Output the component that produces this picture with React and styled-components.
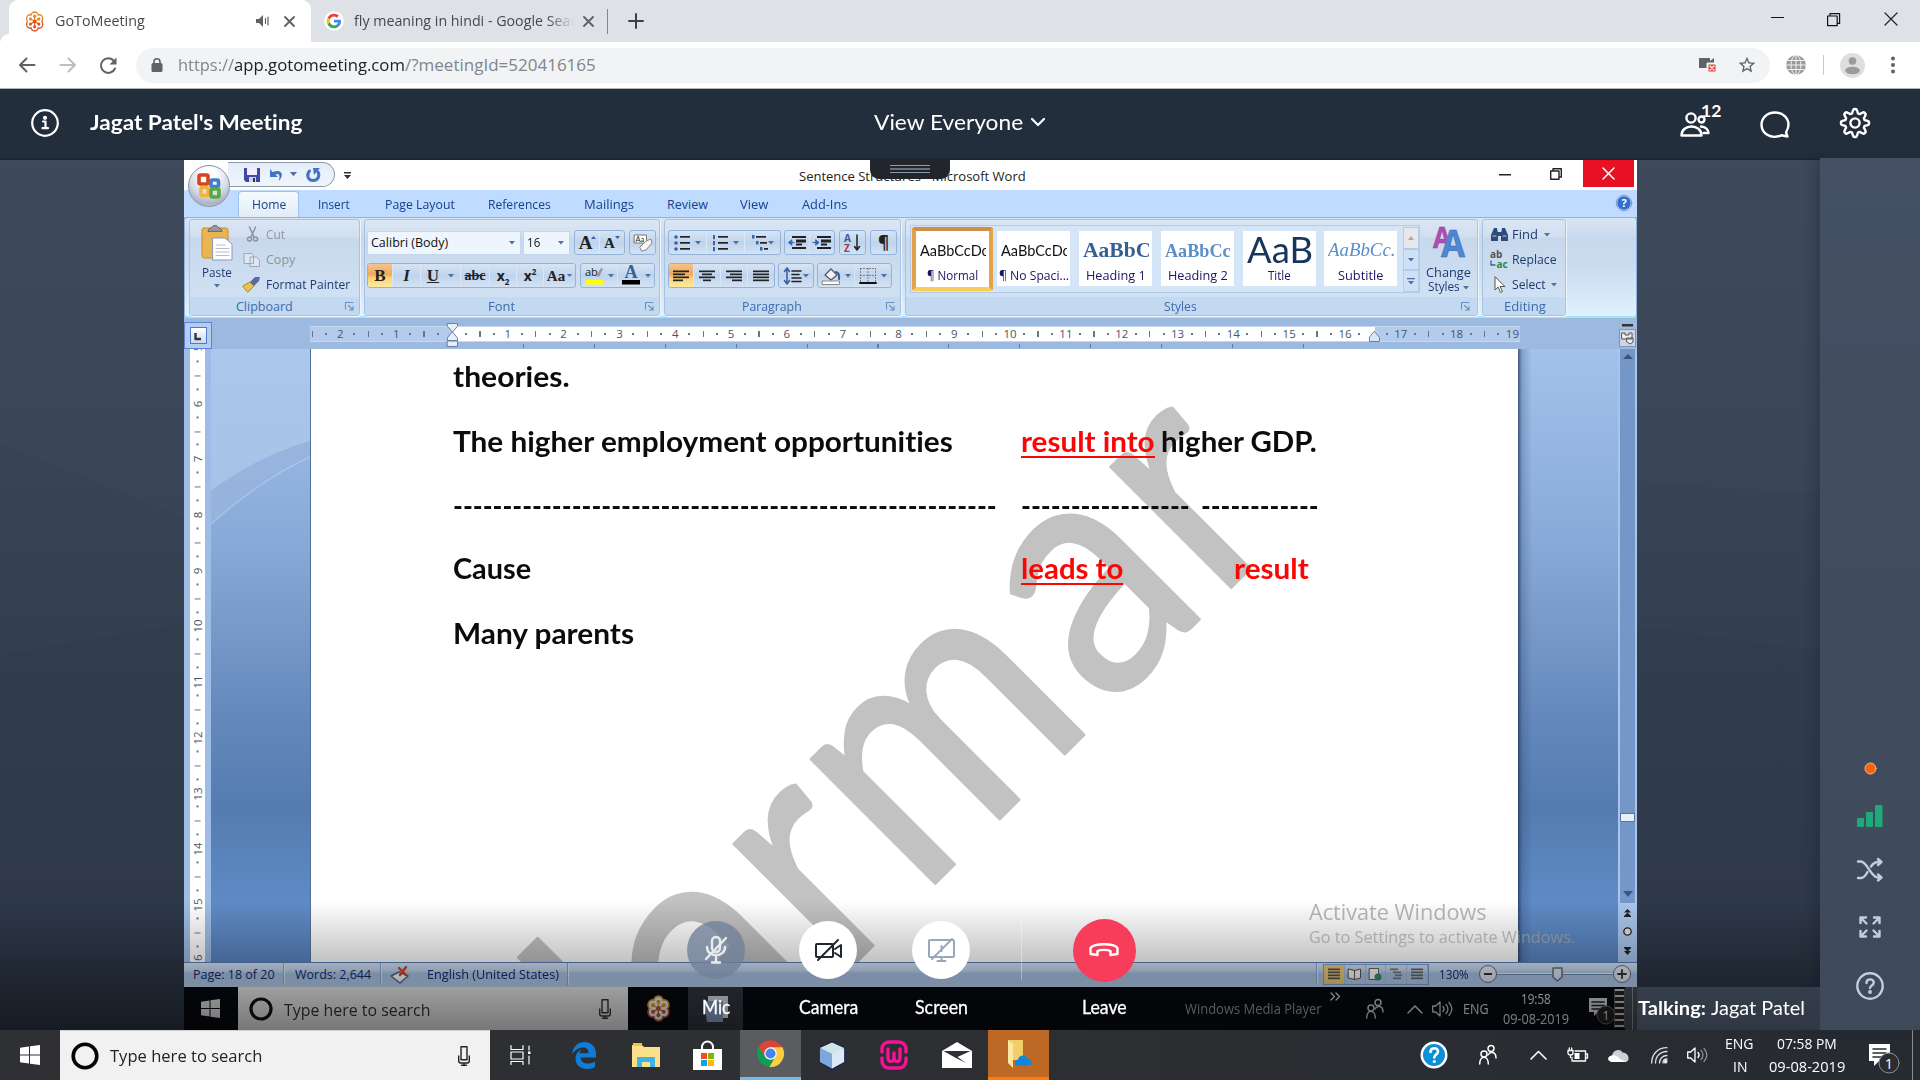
import React, { useLayoutEffect, useRef, useState } from "react";
import styled, { createGlobalStyle, css } from "styled-components";

const SANS = '"Open Sans", "Noto Sans", sans-serif';
const LATO = 'Lato, "Open Sans", sans-serif';

const Global = createGlobalStyle`
  * { box-sizing: border-box; }
  body { margin: 0; background: #2c3543; overflow: hidden; font-variant-ligatures: none; }
  svg { display: block; flex: none; overflow: visible; }
`;

/* ---------- shared pieces ---------- */

const FitBox = styled.span`
  display: block;
  flex: none;
  width: ${(p) => p.$w}px;
  margin-left: ${(p) => p.$ml || 0}px;
  margin-top: ${(p) => p.$mt || 0}px;
  font-family: ${(p) => p.$font || "inherit"};
  font-size: ${(p) => (p.$size ? p.$size + "px" : "inherit")};
  font-weight: ${(p) => p.$weight || "inherit"};
  color: ${(p) => p.$color || "inherit"};
  white-space: pre;
`;
const FitInner = styled.span`
  display: inline-block;
  transform-origin: 0 50%;
`;

function Fit({ w, ml, mt, size, weight, font, color, children }) {
  const ref = useRef(null);
  const [k, setK] = useState(1);
  useLayoutEffect(() => {
    const natural = ref.current.offsetWidth;
    if (natural) setK(w / natural);
  }, [w, children]);
  return (
    <FitBox $w={w} $ml={ml} $mt={mt} $size={size} $weight={weight} $font={font} $color={color}>
      <FitInner ref={ref} style={{ transform: `scaleX(${k})` }}>{children}</FitInner>
    </FitBox>
  );
}

const Slot = styled.div`
  flex: none;
  display: flex;
  align-items: center;
  justify-content: center;
  width: ${(p) => p.$w}px;
  margin-left: ${(p) => p.$ml || 0}px;
  margin-top: ${(p) => p.$mt || 0}px;
`;
const Row = styled.div`
  display: flex;
  align-items: center;
  flex: none;
`;
const Grow = styled.div`flex: 1;`;

const Icon = ({ w, h, vb, stroke = "none", fill = "none", sw = 2, children }) => (
  <svg width={w} height={h || w} viewBox={vb || `0 0 ${w} ${h || w}`} fill={fill} stroke={stroke} strokeWidth={sw} strokeLinecap="round" strokeLinejoin="round">{children}</svg>
);

function Flower({ size, stroke = "#e8861f", inner = "#d9541e" }) {
  const pts = [0, 60, 120, 180, 240, 300].map((a) => {
    const r = (a * Math.PI) / 180;
    return [12 + 6.3 * Math.sin(r), 12 - 6.3 * Math.cos(r)];
  });
  const tone = (i) => (i > 1 && i < 5 ? inner : stroke);
  return (
    <svg width={size * 0.92} height={size} viewBox="0 0 24 24" preserveAspectRatio="none">
      {pts.map(([x, y], i) => <circle key={i} cx={x} cy={y} r="5.4" fill={tone(i)} />)}
      <circle cx="12" cy="12" r="6" fill="#fff" />
      {pts.map(([x, y], i) => <circle key={i} cx={x} cy={y} r="3.7" fill="#fff" />)}
      {pts.map(([x, y], i) => <circle key={i} cx={12 + (x - 12) * 0.95} cy={12 + (y - 12) * 0.95} r="1.9" fill={tone(i)} />)}
      {pts.map(([x, y], i) => <line key={i} x1="12" y1="12" x2={x} y2={y} stroke={tone(i)} strokeWidth="1.2" />)}
      <circle cx="12" cy="12" r="2.2" fill={inner} />
    </svg>
  );
}

/* ---------- browser chrome ---------- */

const Screen = styled.div`
  width: 1920px;
  height: 1080px;
  display: flex;
  flex-direction: column;
  overflow: hidden;
  font-family: ${SANS};
`;
const TabStrip = styled.div`
  height: 42px;
  flex: none;
  display: flex;
  background: #dee1e6;
  color: #45494d;
  font-size: 14px;
`;
const ActiveTab = styled.div`
  width: 302px;
  margin-left: 9px;
  height: 42px;
  display: flex;
  align-items: center;
  background: #fff;
  border-radius: 9px 9px 0 0;
  box-shadow: -9px 34px 0 -0px #fff;
  clip-path: inset(0 -9px 0 -9px);
`;
const Tab = styled.div`
  height: 42px;
  display: flex;
  align-items: center;
`;
const FadedTitle = styled.div`
  width: 220px;
  overflow: hidden;
  margin-left: 11px;
  -webkit-mask-image: linear-gradient(90deg, #000 88%, transparent 100%);
`;
const TabDivider = styled.div`
  width: 1px;
  height: 25px;
  margin-left: 13px;
  background: #80868b;
`;
const Toolbar = styled.div`
  height: 47px;
  flex: none;
  display: flex;
  align-items: center;
  background: #fff;
  border-bottom: 1px solid #b0b2b5;
`;
const UrlPill = styled.div`
  width: 1634px;
  height: 35px;
  flex: none;
  margin-left: 19px;
  display: flex;
  align-items: center;
  border-radius: 18px;
  background: #f1f3f4;
  color: #80868b;
  font-size: 17px;
`;
const ThinLine = styled.div`
  width: 1px;
  height: 20px;
  margin-left: 17px;
  background: #c8cacc;
`;

const CloseX = ({ size = 9, color = "#5f6368", sw = 1.9 }) => (
  <Icon w={size} stroke={color} sw={sw}><path d={`M0 0L${size} ${size}M${size} 0L0 ${size}`} /></Icon>
);

function Chrome() {
  return (
    <>
      <TabStrip>
        <ActiveTab>
          <Slot $w={22} $ml={15}><Flower size={21} /></Slot>
          <Fit w={90} ml={9} mt={-2}>GoToMeeting</Fit>
          <Slot $w={16} $ml={109}>
            <Icon w={13} h={12}><path d="M0 4h3l4-4v12l-4-4H0z" fill="#5f6368" /><path d="M9.5 3.5v5M12 2v8" stroke="#5f6368" strokeWidth="1.2" /></Icon>
          </Slot>
          <Slot $w={12} $ml={13}><CloseX /></Slot>
        </ActiveTab>
        <Tab>
          <Slot $w={18} $ml={14}>
            <Icon w={18} vb="0 0 48 48">
              <circle cx="24" cy="24" r="26" fill="#fff" />
              <g transform="translate(4.5 4.5) scale(.81)">
                <path fill="#EA4335" d="M24 9.5c3.54 0 6.71 1.22 9.21 3.6l6.85-6.85C35.9 2.38 30.47 0 24 0 14.62 0 6.51 5.38 2.56 13.22l7.98 6.19C12.43 13.72 17.74 9.5 24 9.5z" />
                <path fill="#4285F4" d="M46.98 24.55c0-1.57-.15-3.09-.38-4.55H24v9.02h12.94c-.58 2.96-2.26 5.48-4.78 7.18l7.73 6c4.51-4.18 7.09-10.36 7.09-17.65z" />
                <path fill="#FBBC05" d="M10.53 28.59c-.48-1.45-.76-2.99-.76-4.59s.27-3.14.76-4.59l-7.98-6.19C.92 16.46 0 20.12 0 24c0 3.88.92 7.54 2.56 10.78l7.97-6.19z" />
                <path fill="#34A853" d="M24 48c6.48 0 11.93-2.13 15.89-5.81l-7.73-6c-2.15 1.45-4.92 2.3-8.16 2.3-6.26 0-11.57-4.22-13.47-9.91l-7.98 6.19C6.51 42.62 14.62 48 24 48z" />
              </g>
            </Icon>
          </Slot>
          <FadedTitle><Fit w={238} mt={-2}>fly meaning in hindi - Google Search</Fit></FadedTitle>
          <Slot $w={12} $ml={8}><CloseX /></Slot>
          <TabDivider />
          <Slot $w={16} $ml={20}><Icon w={14} stroke="#3c4043" sw={2}><path d="M7 0v14M0 7h14" /></Icon></Slot>
        </Tab>
        <Grow />
        <Slot $w={14} $mt={-7}><Icon w={13} h={1}><rect width="13" height="1" fill="#111" /></Icon></Slot>
        <Slot $w={14} $ml={42} $mt={-4}><Icon w={13} h={13} stroke="#111" sw={1.2}><path d="M.6 3h9.6v9.6H.6zM3 3V.6h9.6v9.8h-2.2" /></Icon></Slot>
        <Slot $w={14} $ml={44} $mt={-4}><CloseX size={12} color="#222" sw={1.2} /></Slot>
        <Slot $w={22} />
      </TabStrip>
      <Toolbar>
        <Slot $w={18} $ml={18}><Icon w={16} h={14} stroke="#5f6368"><path d="M15.5 7H1M7.500 .5L1 7l6.500 6.500" /></Icon></Slot>
        <Slot $w={18} $ml={23}><Icon w={16} h={14} stroke="#bcbec1"><path d="M.5 7H15M8.500 .5L15 7l-6.500 6.500" /></Icon></Slot>
        <Slot $w={18} $ml={22}><Icon w={17} stroke="#5f6368"><path d="M15 11.500A7.300 7.300 0 1 1 14 4" /><path d="M16.500 .5v7h-7z" fill="#5f6368" stroke="none" /></Icon></Slot>
        <UrlPill>
          <Slot $w={12} $ml={15}><Icon w={12} h={14}><rect x=".5" y="5" width="11" height="9" rx="1.500" fill="#5f6368" /><path d="M3 6V3.700a3 3 0 0 1 6 0V6" stroke="#5f6368" strokeWidth="1.600" /></Icon></Slot>
          <Fit w={56} ml={15} mt={-2}>https://</Fit>
          <Fit w={171} mt={-2} color="#202124">app.gotomeeting.com</Fit>
          <Fit w={191} mt={-2}>/?meetingId=520416165</Fit>
          <Grow />
          <Icon w={18} h={16}><path d="M0 1h11v3l4-3v10H0z" fill="#5f6368" /><rect x="8.500" y="6.500" width="9" height="9" fill="#db4437" stroke="#f1f3f4" /><path d="M11 9l4 4M15 9l-4 4" stroke="#fff" strokeWidth="1.300" /></Icon>
          <Slot $w={20} $ml={20}><Icon w={20} vb="0 0 24 24" fill="#5f6368"><path d="M22 9.240l-7.190-.62L12 2 9.190 8.630 2 9.240l5.460 4.730L5.820 21 12 17.270 18.180 21l-1.630-7.030L22 9.240zM12 15.400l-3.760 2.270 1-4.280-3.320-2.880 4.380-.38L12 6.100l1.710 4.040 4.380.38-3.320 2.880 1 4.280L12 15.400z" /></Icon></Slot>
          <Slot $w={13} />
        </UrlPill>
        <Slot $w={20} $ml={16}>
          <Icon w={20} stroke="#f2f2f2" sw={1}><circle cx="10" cy="10" r="9.800" fill="#9a9a9a" stroke="none" /><path d="M10 0v20M0 10h20M2 5.500h16M2 14.500h16" /><ellipse cx="10" cy="10" rx="5" ry="9.800" /></Icon>
        </Slot>
        <ThinLine />
        <Slot $w={25} $ml={16}>
          <Icon w={25}><circle cx="12.500" cy="12.500" r="12.500" fill="#dedede" /><circle cx="12.500" cy="8" r="3.800" fill="#9b9b9b" /><ellipse cx="12.500" cy="17.500" rx="7.300" ry="3.800" fill="#9b9b9b" /></Icon>
        </Slot>
        <Slot $w={6} $ml={25}><Icon w={4} h={18} fill="#5f6368"><circle cx="2" cy="2.500" r="2" /><circle cx="2" cy="9" r="2" /><circle cx="2" cy="15.500" r="2" /></Icon></Slot>
      </Toolbar>
    </>
  );
}

/* ---------- meeting header ---------- */

const MeetingBar = styled.div`
  height: 71px;
  flex: none;
  display: flex;
  align-items: center;
  padding-bottom: 4px;
  background: linear-gradient(#232e3c 69px, #21262d 69px);
  color: #fff;
  font-family: ${LATO};
`;
const Count = styled.div`
  align-self: flex-start;
  margin: 12px 0 0 -9px;
  font-weight: 700;
  font-size: 17.500px;
  line-height: 20px;
  width: 22px;
`;

const gearPath = (() => {
  const n = 64, p = [];
  for (let i = 0; i < n; i++) {
    const a = (i / n) * Math.PI * 2;
    const r = 12 + 2.1 * Math.tanh(2.2 * Math.cos(8 * a));
    p.push(`${(15 + r * Math.sin(a)).toFixed(2)} ${(15 - r * Math.cos(a)).toFixed(2)}`);
  }
  return "M" + p.join("L") + "Z";
})();

function Header() {
  return (
    <MeetingBar>
      <Slot $w={28} $ml={31}>
        <Icon w={28} stroke="#fff" sw={2.2}><circle cx="14" cy="14" r="12.800" /><path d="M12 12.500h2.500V19M11.500 19.200h5.500" /><circle cx="14" cy="8.800" r="1" fill="#fff" sw={1} /></Icon>
      </Slot>
      <Fit w={212} ml={31} size={21.5} weight={700} mt={-2}>{"Jagat Patel's Meeting"}</Fit>
      <Fit w={149} ml={572} size={21.5} mt={-2}>View Everyone</Fit>
      <Slot $w={14} $ml={8} $mt={-1}><Icon w={12} h={7} stroke="#fff" sw={2.2}><path d="M0 0l6 6 6-6" /></Icon></Slot>
      <Slot $w={31} $ml={634} $mt={4}>
        <Icon w={30} h={25} stroke="#fff" sw={2.400}><circle cx="11" cy="6" r="4.600" /><path d="M1.500 23.500c0-12 20-12 20 0z" /><circle cx="21.500" cy="7.500" r="3" /><path d="M21 14.500c5 .5 7.500 3.500 7.500 6.500h-5" /></Icon>
      </Slot>
      <Count>12</Count>
      <Slot $w={30} $ml={37} $mt={4}>
        <Icon w={30} h={27} stroke="#fff" sw={2.400}><path d="M27.500 25.500l-6-1.200C10 29 1.500 22 1.500 13.500 1.500 7 7 1.500 15 1.500S28.500 7 28.500 13.500c0 4-2 7-2.500 8z" /></Icon>
      </Slot>
      <Slot $w={30} $ml={50}>
        <Icon w={30} stroke="#fff" sw={2.400}><path d={gearPath} /><circle cx="15" cy="15" r="4.600" /></Icon>
      </Slot>
    </MeetingBar>
  );
}

/* ---------- stage ---------- */

const Stage = styled.div`
  position: relative;
  height: 870px;
  flex: none;
  display: flex;
`;
const Side = styled.div`
  width: ${(p) => p.$w}px;
  flex: none;
  display: flex;
  flex-direction: column;
  background: linear-gradient(#3e495a 0, #3a4557 35%, #343f50 60%, #2f394a 100%);
`;
const Hills = styled.div`
  flex: 1;
  background:
    linear-gradient(${(p) => p.$a}deg, rgba(30, 38, 52, 0.08) 45%, transparent 45.3%),
    linear-gradient(${(p) => 360 - p.$a + 12}deg, rgba(30, 38, 52, 0.06) 62%, transparent 62.3%);
`;
const Rail = styled.div`
  width: 100px;
  height: 872px;
  margin-top: -2px;
  flex: none;
  display: flex;
  flex-direction: column;
  align-items: center;
  background: linear-gradient(#445063, #3e4959);
  box-shadow: -6px 0 10px rgba(20, 26, 36, 0.25);
`;
const RailItem = styled.div`
  height: ${(p) => p.$h}px;
  margin-top: ${(p) => p.$mt}px;
  display: flex;
  align-items: center;
`;

/* ---------- word ---------- */

const Word = styled.div`
  width: 1453px;
  flex: none;
  display: flex;
  flex-direction: column;
  background: #9cbae0;
  font-size: 12.5px;
  color: #15428b;
`;
const WordTop = styled.div`
  position: relative;
  height: 30px;
  flex: none;
  display: flex;
  align-items: center;
  background: #fff;
`;
const OfficeOrb = styled.div`
  position: absolute;
  left: 4px;
  top: 5px;
  width: 42px;
  height: 42px;
  border-radius: 50%;
  display: flex;
  align-items: center;
  justify-content: center;
  border: 1px solid #8d95a3;
  background: radial-gradient(circle at 50% 25%, #ffffff 0 20%, #d5d9e4 55%, #aab2c6 78%, #f0f3fa 100%);
  z-index: 2;
`;
const QuickBar = styled.div`
  width: 107px;
  height: 25px;
  margin-left: 44px;
  margin-top: -1px;
  padding-left: 16px;
  display: flex;
  align-items: center;
  border: 1px solid #8e97a8;
  border-left: none;
  border-radius: 0 13px 13px 0;
  background: linear-gradient(#e3edf9, #f0f5fb);
`;
const WordTabs = styled.div`
  height: 27px;
  flex: none;
  display: flex;
  align-items: center;
  padding-top: 1px;
  background: #bfdbff;
`;
const HomeTab = styled.div`
  width: 61px;
  height: 26px;
  margin-left: 54px;
  display: flex;
  align-items: center;
  border: 1px solid #9cc3f0;
  border-bottom: none;
  border-radius: 4px 4px 0 0;
  background: linear-gradient(#f5fafe, #e2ecf8);
`;
const Ribbon = styled.div`
  height: 101px;
  flex: none;
  display: flex;
  align-items: flex-start;
  gap: 4px;
  padding: 1px 4px;
  border: 1px solid #8db2e3;
  border-bottom: 2px solid #a3e5f5;
  border-radius: 4px;
  background: linear-gradient(#dbe6f4 0, #c9d9ed 20%, #cbdcf0 50%, #dff2fb 100%);
`;
const Group = styled.div`
  width: ${(p) => p.$w}px;
  height: 97px;
  flex: none;
  display: flex;
  flex-direction: column;
  border: 1px solid #a6c3e3;
  border-radius: 3px;
  box-shadow: 1px 1px 0 #eef5fc;
  background: linear-gradient(#dce7f5 0, #d0deef 18%, #c7d8ed 19%, #d3e3f5 100%);
  overflow: hidden;
`;
const GroupBody = styled.div`
  flex: 1;
  display: flex;
  color: #1e3a72;
`;
const GroupFoot = styled.div`
  height: 18px;
  flex: none;
  display: flex;
  align-items: center;
  background: #c2d9f1;
  color: #3e6aaa;
`;
const Stack = styled.div`
  display: flex;
  flex-direction: column;
  margin-left: ${(p) => p.$ml || 0}px;
  padding-top: ${(p) => p.$pt || 0}px;
  gap: ${(p) => p.$gap || 0}px;
  align-items: ${(p) => p.$align || "flex-start"};
`;
const MiniRow = styled.div`
  display: flex;
  align-items: center;
  height: ${(p) => p.$h || 24}px;
  color: ${(p) => p.$color || "inherit"};
`;
const Combo = styled.div`
  width: ${(p) => p.$w}px;
  height: 24px;
  margin-right: ${(p) => p.$mr}px;
  padding: 0 5px 0 3px;
  display: flex;
  align-items: center;
  justify-content: space-between;
  background: #eef5fd;
  border: 1px solid #c3d6ec;
  color: #111;
`;
const Set = styled.div`
  height: 25px;
  display: flex;
  margin-right: ${(p) => p.$mr || 0}px;
  border: 1px solid #94b3da;
  border-radius: 3px;
  overflow: hidden;
  background: linear-gradient(#d6e4f5, #c3d6ee 45%, #bdd2ec 46%, #d3e3f5);
`;
const Cell = styled.div`
  width: ${(p) => p.$w}px;
  display: flex;
  align-items: center;
  justify-content: center;
  gap: 5px;
  border-right: 1px solid #d9e7f7;
  font-family: ${(p) => (p.$serif ? '"Liberation Serif", serif' : "inherit")};
  font-size: ${(p) => p.$size || 14}px;
  line-height: 20px;
  font-weight: ${(p) => p.$weight || 400};
  font-style: ${(p) => (p.$italic ? "italic" : "normal")};
  text-decoration: ${(p) => p.$deco || "none"};
  color: #222;
  &:last-child { border-right: none; }
  sub, sup { font-size: 8px; line-height: 0; }
  ${(p) => p.$on && css`background: linear-gradient(#f5c38b, #f2a85a 45%, #fbd074 60%, #fdeb9e);`}
`;
const Gallery = styled.div`
  width: 510px;
  height: 68px;
  margin: 5px 0 0 4px;
  padding-top: 1px;
  display: flex;
  border: 1px solid #b3cceb;
  background: #d5e5f8;
`;
const StyleCard = styled.div`
  width: ${(p) => (p.$on ? 81 : 73)}px;
  height: ${(p) => (p.$on ? 64 : 55)}px;
  margin-left: ${(p) => p.$ml}px;
  margin-top: ${(p) => (p.$on ? 0 : 4)}px;
  flex: none;
  display: flex;
  flex-direction: column;
  align-items: center;
  background: #fff;
  overflow: hidden;
  ${(p) => p.$on && css`border: 4px solid #e3a247; border-bottom-color: #f8ce5a; border-top-color: #cf8f4a; border-radius: 3px;`}
`;
const Sample = styled.div`
  height: 35px;
  width: 66px;
  overflow: hidden;
  display: flex;
  align-items: center;
  font-family: ${(p) => p.$family || LATO};
  color: ${(p) => p.$color || "#111"};
  font-size: ${(p) => p.$size || 15}px;
  line-height: 35px;
  padding-top: ${(p) => p.$drop || 0}px;
  font-weight: ${(p) => p.$weight || 400};
  font-style: ${(p) => (p.$italic ? "italic" : "normal")};
`;
const StyleName = styled.div`
  height: 18px;
  display: flex;
  align-items: center;
  color: #1c1464;
`;
const Scroller = styled.div`
  width: 16px;
  margin-left: auto;
  display: flex;
  flex-direction: column;
`;
const ScrollBtn = styled.div`
  flex: 1;
  display: flex;
  align-items: center;
  justify-content: center;
  border: 1px solid #b3cceb;
  background: ${(p) => (p.$off ? "#e8e8ea" : "#cfe1f7")};
`;

const Down = ({ c = "#4f6f9c", w = 6 }) => <svg width={w} height={w * 0.6} viewBox="0 0 6 3.6"><path d="M0 0h6L3 3.6z" fill={c} /></svg>;
const Launcher = () => <Icon w={9} stroke="#6a8fc0" sw={1.1}><path d="M.5 7V.5H8M3.500 3.500L8 8M8 4.500V8H4.500" /></Icon>;
const Lines = ({ rows, c = "#222", w = 16 }) => (
  <svg width={w} height={rows.length * 3} viewBox={`0 0 ${w} ${rows.length * 3}`}>
    {rows.map(([x, l], i) => <rect key={i} x={x} y={i * 3 + 0.5} width={l} height="1.7" fill={c} />)}
  </svg>
);
const ListIcon = ({ kind }) => (
  <Icon w={16} h={16}>
    {[1, 7, 13].map((y, i) => (
      <g key={y}>
        {kind === 0 && <circle cx="2" cy={y + 1} r="1.800" fill="#3a62a8" />}
        {kind === 1 && <rect x="1" y={y - 1} width="2" height="4.200" fill="#3a62a8" />}
        {kind === 2 && <rect x={i * 4} y={y - 1} width="2.500" height="3.500" fill="#3a62a8" />}
        <rect x={kind === 2 ? 4 + i * 4 : 6} y={y} width={kind === 2 ? 10 - i * 3 : 10} height="1.700" fill="#222" />
      </g>
    ))}
  </Icon>
);
const Indent = ({ flip }) => (
  <Icon w={18} h={14}>
    <g fill="#222"><rect x="4" y="0" width="14" height="2" /><rect x="8" y="3.500" width="10" height="3" /><rect x="8" y="7.500" width="6" height="2" /><rect x="4" y="11" width="14" height="2" /></g>
    <path d={flip ? "M0 6.500h4M3 4l3 2.500L3 9z" : "M6 6.500H2M3.500 4l-3 2.500 3 2.500z"} fill="#3a62a8" stroke="#3a62a8" strokeWidth="1" />
  </Icon>
);

const tabs = [["Insert", 32, 19], ["Page Layout", 70, 35], ["References", 63, 33], ["Mailings", 50, 33], ["Review", 41, 33], ["View", 28, 32], ["Add-Ins", 45, 34]];

const SERIF = '"Liberation Serif", serif';
const cards = [
  { n: "¶ Normal", w: 51, s: "AaBbCcDc", sw: 69, size: 16, ml: 1, drop: 2, on: true },
  { n: "¶ No Spaci...", w: 70, s: "AaBbCcDc", sw: 69, size: 16, ml: 4, drop: 2 },
  { n: "Heading 1", w: 60, s: "AaBbCc", sw: 78, size: 21, ml: 9, drop: 3, family: SERIF, weight: 700, color: "#365f91" },
  { n: "Heading 2", w: 60, s: "AaBbCc", sw: 66, size: 19, ml: 9, drop: 3, family: SERIF, weight: 700, color: "#5b8fcb" },
  { n: "Title", w: 23, s: "AaB", sw: 66, size: 37, ml: 9, drop: 0, family: LATO, color: "#17365d" },
  { n: "Subtitle", w: 45, s: "AaBbCc.", sw: 68, size: 18, ml: 8, drop: 3, family: SERIF, italic: true, color: "#5b8fcb" },
];

function WordRibbon() {
  return (
    <Ribbon>
      <Group $w={171}>
        <GroupBody>
          <Stack $ml={11} $pt={5} $align="center">
            <Icon w={32} h={36}><rect x="1" y="3" width="26" height="30" rx="2" fill="#e9b552" stroke="#c98f2e" strokeWidth="1" /><path d="M7 6c0-3 3-2 4-4 1-2 5-2 6 0 1 2 4 1 4 4z" fill="#9a9a9a" stroke="#666" strokeWidth="1" /><path d="M12 13h12l7 6v16H12z" fill="#fdfdff" stroke="#8a9bb8" strokeWidth="1" /><path d="M15 20h9M15 23.500h13M15 27h13M15 30.500h13" stroke="#b4bccb" strokeWidth="1" /></Icon>
            <Fit w={30} mt={3}>Paste</Fit>
            <Slot $w={8} $mt={3}><Down /></Slot>
          </Stack>
          <Stack $ml={11} $pt={2}>
            <MiniRow $h={25} $color="#8d95a0">
              <Slot $w={16}><Icon w={11} h={15} stroke="#8a94a6" sw={1.5}><path d="M2.500 0l4.500 10M8.500 0L4 10" /><circle cx="2.500" cy="12" r="2" /><circle cx="8.500" cy="12" r="2" /></Icon></Slot>
              <Fit w={19} ml={6}>Cut</Fit>
            </MiniRow>
            <MiniRow $h={25} $color="#8d95a0">
              <Slot $w={16}><Icon w={16} h={14} stroke="#9aa7bd" sw={1} fill="#dfe6f1"><path d="M.5 .5h7l2 2v8h-9zM6.500 4h6l3 3v6.500h-9z" /></Icon></Slot>
              <Fit w={29} ml={6}>Copy</Fit>
            </MiniRow>
            <MiniRow $h={25}>
              <Slot $w={16}><Icon w={18} h={15}><path d="M0 9l7-4 4 4-6 6z" fill="#e8c54a" stroke="#a98721" strokeWidth="1" /><path d="M7 5l5-5 5 0-1 4-5 5z" fill="#5a6aa0" /></Icon></Slot>
              <Fit w={84} ml={6}>Format Painter</Fit>
            </MiniRow>
          </Stack>
        </GroupBody>
        <GroupFoot><Fit w={57} ml={46}>Clipboard</Fit><Slot $w={9} $ml={52}><Launcher /></Slot></GroupFoot>
      </Group>

      <Group $w={296}>
        <GroupBody>
          <Stack $ml={2} $pt={10} $gap={8}>
            <MiniRow $h={25}>
              <Combo $w={154} $mr={2}><Fit w={77}>Calibri (Body)</Fit><Down /></Combo>
              <Combo $w={47} $mr={4}><Fit w={13}>16</Fit><Down /></Combo>
              <Set $mr={4}>
                <Cell $w={25} $serif $size={19} $weight={700}>A<Slot $w={4} $ml={-6} $mt={-10}><svg width="5" height="3"><path d="M0 3h5L2.500 0z" fill="#3a62a8" /></svg></Slot></Cell>
                <Cell $w={24} $serif $size={15} $weight={700}>A<Slot $w={4} $ml={-4} $mt={-10}><Down w={5} c="#3a62a8" /></Slot></Cell>
              </Set>
              <Set><Cell $w={25}><Icon w={18} h={18}><rect x=".5" y="1" width="12" height="8" fill="#fff" stroke="#777" strokeWidth="1" /><text x="1.500" y="8" fontSize="7.500" fontFamily="Lato" fill="#222" stroke="none">Aa</text><path d="M6 13l6-6 5-2 1 4-6 7-4 1z" fill="#f4f4f8" stroke="#888" strokeWidth="1" /></Icon></Cell></Set>
            </MiniRow>
            <MiniRow $h={25}>
              <Set $mr={4}>
                <Cell $w={25} $serif $size={17} $weight={700} $on>B</Cell>
                <Cell $w={28} $serif $size={17} $weight={700} $italic>I</Cell>
                <Cell $w={40} $serif $size={17} $weight={700}><u>U</u><Slot $w={6} $ml={4}><Down /></Slot></Cell>
                <Cell $w={29} $serif $size={14} $weight={700} $deco="line-through">abc</Cell>
                <Cell $w={27} $size={14} $weight={700}><span>x<sub>2</sub></span></Cell>
                <Cell $w={27} $size={14} $weight={700}><span>x<sup>2</sup></span></Cell>
                <Cell $w={31} $serif $size={15} $weight={700}>Aa<Slot $w={5} $ml={-3}><Down w={5} /></Slot></Cell>
              </Set>
              <Set>
                <Cell $w={37}><Icon w={18} h={20}><text x="0" y="10" fontSize="11" fontFamily="Open Sans" fill="#222" stroke="none">ab</text><path d="M11 10l5-8 2 1-4 8z" fill="#999" /><rect x="0" y="14" width="18" height="4.500" fill="#ffff00" /></Icon><Down /></Cell>
                <Cell $w={36}><Icon w={18} h={20}><text x="2.500" y="12" fontSize="18" fontWeight="700" fontFamily="Liberation Serif" fill="#365f9c" stroke="none">A</text><rect x="0" y="14" width="18" height="4.500" fill="#000" /></Icon><Down /></Cell>
              </Set>
            </MiniRow>
          </Stack>
        </GroupBody>
        <GroupFoot><Fit w={27} ml={123}>Font</Fit><Slot $w={9} $ml={130}><Launcher /></Slot></GroupFoot>
      </Group>

      <Group $w={237}>
        <GroupBody>
          <Stack $ml={3} $pt={10} $gap={8}>
            <MiniRow $h={25}>
              <Set $mr={3}>
                <Cell $w={38}><ListIcon kind={0} /><Down /></Cell>
                <Cell $w={38}><ListIcon kind={1} /><Down /></Cell>
                <Cell $w={35}><ListIcon kind={2} /><Slot $w={4} $ml={-4}><Down /></Slot></Cell>
              </Set>
              <Set $mr={4}><Cell $w={25}><Indent /></Cell><Cell $w={24}><Indent flip /></Cell></Set>
              <Set $mr={4}><Cell $w={25}><Icon w={17} h={18}><text x="0" y="8" fontSize="10" fontWeight="700" fontFamily="Open Sans" fill="#365f9c" stroke="none">A</text><text x="0" y="18" fontSize="10" fontWeight="700" fontFamily="Open Sans" fill="#a04040" stroke="none">Z</text><path d="M13 1v14M10.500 12.500L13 16l2.500-3.500" stroke="#222" strokeWidth="1.500" /></Icon></Cell></Set>
              <Set><Cell $w={25} $size={17} $weight={700}>¶</Cell></Set>
            </MiniRow>
            <MiniRow $h={25}>
              <Set $mr={3}>
                <Cell $w={25} $on><Lines rows={[[0, 16], [0, 12], [0, 16], [0, 10]]} /></Cell>
                <Cell $w={27}><Lines rows={[[0, 16], [3, 10], [0, 16], [4, 8]]} /></Cell>
                <Cell $w={27}><Lines rows={[[0, 16], [4, 12], [0, 16], [6, 10]]} /></Cell>
                <Cell $w={26}><Lines rows={[[0, 16], [0, 16], [0, 16], [0, 16]]} /></Cell>
              </Set>
              <Set $mr={3}><Cell $w={34}><Icon w={18} h={18}><path d="M3 2v14M.5 4.500L3 1l2.500 3.500M.5 13.500L3 17l2.500-3.500" stroke="#3a62a8" strokeWidth="1.600" /><path d="M8 4h9M8 7.500h7M8 11h9M8 14.500h9" stroke="#222" strokeWidth="1.600" /></Icon><Slot $w={4} $ml={-3}><Down /></Slot></Cell></Set>
              <Set>
                <Cell $w={37}><Icon w={18} h={18}><path d="M3 8l6-6 6 6-6 5z" fill="#f0f2f6" stroke="#555" strokeWidth="1.200" /><path d="M14 5c3 1 3.500 4 3 7" stroke="#365f9c" strokeWidth="2" /><rect x=".5" y="14" width="17" height="3.500" fill="#fff" stroke="#888" strokeWidth="1" /></Icon><Down /></Cell>
                <Cell $w={36}><Icon w={16} h={16} stroke="#777" sw={1}><path d="M.5 .5h15M.5 7.500h15M.5 .5v14M8 .5v14M15.500 .5v14" strokeDasharray="1 2" /><path d="M0 15h16" stroke="#111" strokeWidth="1.800" /></Icon><Down /></Cell>
              </Set>
            </MiniRow>
          </Stack>
        </GroupBody>
        <GroupFoot><Fit w={60} ml={77}>Paragraph</Fit><Slot $w={9} $ml={84}><Launcher /></Slot></GroupFoot>
      </Group>

      <Group $w={573}>
        <GroupBody>
          <Gallery>
            {cards.map((c) => (
              <StyleCard key={c.n} $ml={c.ml} $on={c.on}>
                <Sample $family={c.family} $color={c.color} $size={c.size} $drop={c.drop} $weight={c.weight} $italic={c.italic}><Fit w={c.sw}>{c.s}</Fit></Sample>
                <StyleName><Fit w={c.w}>{c.n}</Fit></StyleName>
              </StyleCard>
            ))}
            <Scroller>
              <ScrollBtn $off><svg width="6" height="4"><path d="M0 4h6L3 0z" fill="#aaa" /></svg></ScrollBtn>
              <ScrollBtn><Down /></ScrollBtn>
              <ScrollBtn><svg width="8" height="7"><path d="M0 0h8v1.200H0zM1 3h6L4 6.600z" fill="#4f6f9c" /></svg></ScrollBtn>
            </Scroller>
          </Gallery>
          <Stack $ml={6} $pt={6} $align="center">
            <Icon w={34} h={32}>
              <text x="1" y="22" fontSize="29" fontWeight="700" fontFamily="Open Sans" fill="#b04fb0" stroke="#8a3d8c" strokeWidth=".5" textLength="18" lengthAdjust="spacingAndGlyphs">A</text>
              <text x="9" y="31" fontSize="37" fontWeight="700" fontFamily="Open Sans" fill="#4f86cf" stroke="#3566ab" strokeWidth=".5" textLength="24" lengthAdjust="spacingAndGlyphs">A</text>
            </Icon>
            <Fit w={45} mt={6}>Change</Fit>
            <Row><Fit w={32} mt={-3}>Styles</Fit><Slot $w={6} $ml={3}><Down /></Slot></Row>
          </Stack>
        </GroupBody>
        <GroupFoot><Fit w={33} ml={258}>Styles</Fit><Slot $w={9} $ml={264}><Launcher /></Slot></GroupFoot>
      </Group>

      <Group $w={84}>
        <GroupBody>
          <Stack $ml={7} $pt={2}>
            <MiniRow $h={25}>
              <Slot $w={18}><Icon w={17} h={15}><path d="M3 1h3l1 6v7H0V8zM11 1h3l3 7v6h-7V7zM6 5h5v4H6z" fill="#2f4a7c" /><path d="M2 9h3M12 9h3" stroke="#b9cbe6" strokeWidth="1.200" /></Icon></Slot>
              <Fit w={26} ml={4}>Find</Fit><Slot $w={6} $ml={6}><Down /></Slot>
            </MiniRow>
            <MiniRow $h={25}>
              <Slot $w={18}><Icon w={18} h={18}><text x="0" y="7" fontSize="10" fontWeight="700" fontFamily="Open Sans" fill="#555" stroke="none">ab</text><text x="6.500" y="17" fontSize="10" fontWeight="700" fontFamily="Open Sans" fill="#2f8a3c" stroke="none">ac</text><path d="M1 10v4h4" stroke="#365f9c" strokeWidth="1.300" /></Icon></Slot>
              <Fit w={45} ml={4}>Replace</Fit>
            </MiniRow>
            <MiniRow $h={25}>
              <Slot $w={18}><Icon w={11} h={16}><path d="M1 0v13l3-3 2.500 5.500 2-1L6 9.500h4.500z" fill="#fff" stroke="#555" strokeWidth="1" /></Icon></Slot>
              <Fit w={34} ml={4}>Select</Fit><Slot $w={6} $ml={5}><Down /></Slot>
            </MiniRow>
          </Stack>
        </GroupBody>
        <GroupFoot><Fit w={42} ml={21}>Editing</Fit></GroupFoot>
      </Group>
    </Ribbon>
  );
}

/* ruler */
const RulerRow = styled.div`
  height: 31px;
  flex: none;
  display: flex;
  align-items: flex-start;
  background: #9cbae0;
`;
const TabBox = styled.div`
  width: 28px;
  height: 27px;
  margin-top: 4px;
  display: flex;
  align-items: center;
  justify-content: center;
  border: 1px solid #5b83d6;
  background: #b5cdf0;
`;
const TabStop = styled.div`
  width: 17px;
  height: 17px;
  display: flex;
  align-items: center;
  justify-content: center;
  border: 1px solid #4f79d0;
  background: linear-gradient(#fff, #c8daf4);
`;
const RulerCol = styled.div`
  position: relative;
  width: 1210px;
  margin: 8px 0 0 98px;
  display: flex;
  flex-direction: column;
`;
const Ruler = styled.div`
  height: 16px;
  display: flex;
  align-items: center;
  overflow: hidden;
  background: linear-gradient(90deg, #b3cbec 142px, #fff 142px, #fff 1065px, #b3cbec 1065px);
  border-top: 1px solid #c6d8f0;
  border-bottom: 1px solid #c6d8f0;
`;
const RulerCells = styled.div`
  display: flex;
  flex: none;
  margin-left: -4.500px;
`;
const RCell = styled.div`
  width: 13.958px;
  flex: none;
  display: flex;
  justify-content: center;
  align-items: center;
  font-size: 11.500px;
  line-height: 14px;
  color: #4a5568;
  white-space: nowrap;
`;
const Mark = styled.i`
  height: ${(p) => (p.$bar ? 6 : 2)}px;
  width: ${(p) => (p.$bar ? 1.300 : 2)}px;
  background: #6a7484;
`;
const TabTicks = styled.div`
  height: 4px;
  margin: 2px 0 0 213px;
  width: 790px;
  background: repeating-linear-gradient(90deg, #6b7b93 0 1px, transparent 1px 70.900px);
`;
const Marker = styled.div`
  position: absolute;
  left: ${(p) => p.$x}px;
  top: ${(p) => p.$y}px;
`;
const SplitBox = styled.div`
  width: 18px;
  margin: 6px 0 0 98px;
  display: flex;
  flex-direction: column;
  align-items: center;
  gap: 2px;
`;
const ViewRulerBtn = styled.div`
  width: 17px;
  height: 18px;
  display: flex;
  align-items: center;
  justify-content: center;
  border: 1px solid #7d95bb;
  background: #cdd6e4;
`;

function mark(k) {
  const q = ((k % 4) + 4) % 4;
  if (q === 0) return k === 0 ? null : Math.abs(k / 4);
  return <Mark $bar={q === 2} />;
}

function HRuler() {
  return (
    <RulerRow>
      <TabBox><TabStop><Icon w={8} stroke="#333" sw={2.400}><path d="M1.500 1v6H7" strokeLinecap="butt" /></Icon></TabStop></TabBox>
      <RulerCol>
        <Ruler>
          <RulerCells>{Array.from({ length: 87 }, (_, i) => <RCell key={i}>{i === 76 ? null : mark(i - 10)}</RCell>)}</RulerCells>
        </Ruler>
        <TabTicks />
        <Marker $x={137} $y={-3}>
          <Icon w={11} h={25} stroke="#6781ab" sw={1} fill="#e8eef8"><path d="M.5 .5h10v3L5.500 9 .5 3.500zM5.500 9l5 6v2.500H.5V15z" /><rect x=".5" y="18" width="10" height="5.500" /></Icon>
        </Marker>
        <Marker $x={1059} $y={5}><Icon w={11} h={11} stroke="#6781ab" sw={1} fill="#dce6f5"><path d="M5.500 .5l5 6v4H.5v-4z" /></Icon></Marker>
      </RulerCol>
      <SplitBox><Icon w={11} h={3}><rect width="11" height="2.500" fill="#333" /></Icon><ViewRulerBtn><Icon w={12} h={13} stroke="#555" sw={1} fill="#eee"><path d="M1 1h3v2h4V1h3v6H1zM6 6h6v4l-3 2-3-2z" /></Icon></ViewRulerBtn></SplitBox>
    </RulerRow>
  );
}

/* document */
const DocRow = styled.div`
  height: 613px;
  flex: none;
  display: flex;
  background: linear-gradient(#a2c2ec 0, #95b6e2 16%, #88aad8 31%, #7799c8 46%, #6488bc 60%, #547cb0 75%, #5f8bc6 91%, #5b86c2 100%);
`;
const VRuler = styled.div`
  width: 27px;
  padding-left: 6px;
  background: #9dbde6;
  flex: none;
  overflow: hidden;
`;
const VTrack = styled.div`
  width: 15px;
  height: 613px;
  overflow: hidden;
  background: #fff;
`;
const VCells = styled.div`
  margin-top: -8px;
`;
const VCell = styled.div`
  height: 13.930px;
  display: flex;
  align-items: center;
  justify-content: center;
  font-size: 11.500px;
  color: #4a5568;
  transform: rotate(-90deg);
`;
const Desk = styled.div`
  width: 99px;
  flex: none;
`;
const Page = styled.div`
  position: relative;
  width: 1208px;
  flex: none;
  overflow: hidden;
  background: #fff;
  border-left: 1px solid #55709a;
`;
const PageShadow = styled.div`
  width: 100px;
  flex: none;
  background: linear-gradient(90deg, rgba(30, 50, 85, 0.75) 0, rgba(40, 65, 110, 0.25) 4px, transparent 14px);
`;
const Watermark = styled.svg`
  position: absolute;
  left: -1px;
  top: 0;
`;
const Prose = styled.div`
  position: relative;
  padding-left: 142px;
  font-family: ${LATO};
  font-weight: 700;
  font-size: 28.500px;
  color: #0c0c0c;
`;
const DocLine = styled.div`
  height: ${(p) => p.$h}px;
  display: flex;
  align-items: flex-end;
  line-height: 36px;
`;
const Under = styled.div`
  color: #fb0505;
  margin-left: ${(p) => p.$ml}px;
  height: 35px;
  border-bottom: 2px solid #fb0505;
  margin-bottom: 1px;
`;
const VScroll = styled.div`
  width: 19px;
  flex: none;
  display: flex;
  flex-direction: column;
  align-items: center;
  background: #a9c5ee;
`;
const VBar = styled.div`
  width: 15px;
  height: 554px;
  display: flex;
  flex-direction: column;
  align-items: center;
  background: #7597c8;
`;
const Thumb = styled.div`
  width: 15px;
  height: 9px;
  border: 1px solid #58749f;
  background: #e9eff8;
`;

const glyphs = [["l", -333, 0.87, 0.935], ["a", -257, 0.87, 0.99], ["r", -99, 0.85, 0.955], ["m", 15, 0.87, 0.985], ["a", 278, 0.87, 0.99], ["r", 434, 0.85, 0.955]];

function Document() {
  return (
    <DocRow>
      <VRuler>
        <VTrack>
          <VCells>{Array.from({ length: 45 }, (_, i) => <VCell key={i}>{i % 4 === 0 ? 5 + i / 4 : <Mark $bar={i % 4 === 2} />}</VCell>)}</VCells>
        </VTrack>
      </VRuler>
      <Desk>
        <svg width="99" height="175" viewBox="0 0 99 175">
          <path d="M0 0H99V92Q45 108 0 142z" fill="#aecaeb" opacity=".75" />
          <path d="M0 142Q45 108 99 92V108Q50 125 0 175z" fill="#97b4dc" opacity=".8" />
          <path d="M0 175Q50 130 99 108" stroke="#a9c4e6" strokeWidth="1.500" fill="none" />
        </svg>
      </Desk>
      <Page>
        <Watermark width="1208" height="613" viewBox="310 349 1208 613">
          <g transform="rotate(-45)" fill="#c2c2c2" stroke="#c2c2c2" strokeWidth="3" strokeLinejoin="round" fontFamily="Lato" fontSize="352">
            {glyphs.map(([g, x, sx, sy], i) => <text key={i} transform={`translate(${x} 1286) scale(${sx} ${sy})`}>{g}</text>)}
          </g>
        </Watermark>
        <Prose>
          <DocLine $h={45}><Fit w={117}>theories.</Fit></DocLine>
          <DocLine $h={65}>
            <Fit w={500}>The higher employment opportunities</Fit>
            <Under $ml={68}><Fit w={134}>result into</Fit></Under>
            <Fit w={156} ml={6}>higher GDP.</Fit>
          </DocLine>
          <DocLine $h={64}>
            <Fit w={544}>{"-".repeat(55)}</Fit>
            <Fit w={169} ml={24}>{"-".repeat(17)}</Fit>
            <Fit w={118} ml={11}>{"-".repeat(12)}</Fit>
          </DocLine>
          <DocLine $h={63}>
            <Fit w={78}>Cause</Fit>
            <Under $ml={490}><Fit w={102}>leads to</Fit></Under>
            <Fit w={75} ml={111} color="#fb0505">result</Fit>
          </DocLine>
          <DocLine $h={65}><Fit w={181}>Many parents</Fit></DocLine>
        </Prose>
      </Page>
      <PageShadow />
      <VScroll>
        <VBar>
          <Slot $w={10} $mt={5}><svg width="10" height="6"><path d="M0 5h10L5 0z" fill="#3d5680" /></svg></Slot>
          <Slot $w={15} $mt={453}><Thumb /></Slot>
          <Slot $w={10} $mt={69}><svg width="10" height="6"><path d="M0 0h10L5 6z" fill="#3d5680" /></svg></Slot>
        </VBar>
        <Slot $w={9} $mt={6}><Icon w={7} h={8} fill="#222"><path d="M0 3.500h7L3.500 0zM0 7h7L3.500 3.500zM0 7h7v1H0z" /></Icon></Slot>
        <Slot $w={9} $mt={10}><Icon w={9} h={9}><circle cx="4.500" cy="4.500" r="3.700" fill="#ddd" stroke="#222" strokeWidth="1.300" /></Icon></Slot>
        <Slot $w={9} $mt={11}><Icon w={7} h={8} fill="#222"><path d="M0 1h7L3.500 4.500zM0 4h7L3.500 8zM0 0h7v1H0z" /></Icon></Slot>
      </VScroll>
    </DocRow>
  );
}

/* status + inner taskbar */
const StatusBar = styled.div`
  height: 25px;
  flex: none;
  display: flex;
  align-items: center;
  padding-bottom: 2px;
  border-top: 1px solid #557fbd;
  background: linear-gradient(#d9e7f8 0, #c8dcf6 30%, #a9c6ec 45%, #bfd6f2 100%);
  color: #142a6e;
`;
const Sep = styled.div`
  width: 2px;
  height: 22px;
  margin-left: ${(p) => p.$ml}px;
  border-left: 1px solid #8aabd6;
  border-right: 1px solid #e6f0fc;
`;
const Views = styled.div`
  height: 21px;
  width: 106px;
  margin-left: 5px;
  display: flex;
  border: 1px solid #7f9fcb;
`;
const View = styled.div`
  flex: 1;
  display: flex;
  align-items: center;
  justify-content: center;
  border-right: 1px solid #a9c0e0;
  background: ${(p) => (p.$on ? "#f5cf7c" : "transparent")};
`;
const RoundBtn = styled.div`
  width: 18px;
  height: 18px;
  flex: none;
  display: flex;
  align-items: center;
  justify-content: center;
  border: 1.500px solid #5f6f8c;
  border-radius: 50%;
  background: #e3ebf7;
`;
const ZoomLine = styled.div`
  width: ${(p) => p.$w}px;
  height: 2px;
  background: #f0f6ff;
  border-bottom: 1px solid #6f87ad;
`;
const InnerTaskbar = styled.div`
  height: 43px;
  flex: none;
  display: flex;
  align-items: center;
  background: #05090f;
  color: #e4e4e4;
  font-size: 14px;
`;
const InnerSearch = styled.div`
  width: 390px;
  height: 43px;
  flex: none;
  margin-left: 18px;
  display: flex;
  align-items: center;
  background: #efefef;
  color: #333;
  font-size: 17px;
`;
const AppSlot = styled.div`
  width: ${(p) => p.$w}px;
  height: ${(p) => (p.$h ? p.$h + "px" : "100%")};
  flex: none;
  align-self: ${(p) => (p.$h ? "flex-start" : "auto")};
  margin-left: ${(p) => p.$ml || 0}px;
  display: flex;
  align-items: center;
  justify-content: center;
  background: ${(p) => p.$bg || "transparent"};
  ${(p) => p.$line && css`border-bottom: 3px solid ${p.$line};`}
`;
const EdgeStrip = styled.div`
  width: 11px;
  height: 39px;
  flex: none;
  background: repeating-linear-gradient(#c8c8c8 0 2px, #222 2px 6px);
  border-left: 1px solid #555;
  border-right: 1px solid #555;
`;
const EdgePad = styled.div`
  width: 12px;
  height: 43px;
  flex: none;
  background: linear-gradient(90deg, #444b56 0 7px, #8a8f98 7px 8px, #444b56 8px);
`;
const TwoLine = styled.div`
  display: flex;
  flex-direction: column;
  align-items: center;
  margin-left: ${(p) => p.$ml}px;
  margin-top: ${(p) => p.$mt || 0}px;
  line-height: ${(p) => p.$lh}px;
`;

const WinLogo = ({ w, c }) => (
  <Icon w={w} h={w} vb="0 0 20 20" fill={c}><path d="M0 2.800L9 1.500V9.500H0zM10 1.350L20 0V9.500H10zM0 10.500H9V18.500L0 17.200zM10 10.500H20V20L10 18.650z" /></Icon>
);
const MicOutline = ({ c, h = 20 }) => (
  <Icon w={12} h={h} vb="0 0 12 20" stroke={c} sw={1.400}><rect x="3" y=".7" width="6" height="13" /><path d="M.7 10v4.500c0 2 1 2.500 2 2.500h6.600c1 0 2-.5 2-2.500V10M6 17v2.300M3.500 19.300h5" /></Icon>
);
const People = ({ c }) => (
  <Icon w={18} h={20} stroke={c} sw={1.500}><circle cx="12" cy="3.500" r="3" /><circle cx="5" cy="9" r="3" /><path d="M.7 19c0-9 8.600-9 8.600 0M9 10c2-4 8-3.500 8 3" /></Icon>
);
const Speaker = ({ c, dim = c }) => (
  <Icon w={20} h={16} stroke={c} sw={1.300}><path d="M.7 5h3L8 1v14l-4.300-4H.7z" /><path d="M11 5.500c1.300 1.500 1.300 3.500 0 5" /><path d="M14 3.500c2.600 2.500 2.600 6.500 0 9M17 1.500c3.500 4 3.500 9 0 13" stroke={dim} /></Icon>
);
const Note = ({ c, dark, badge }) => (
  <Icon w={32} h={30}><path d="M0 0h21v17H10l-5 5v-5H0z" fill={c} /><path d="M4 5h13M4 9h13M4 13h9" stroke={dark} strokeWidth="1.600" /><circle cx="20" cy="19" r="10" fill="#2b2d31" stroke={badge} strokeWidth="1" /><text x="20" y="24.500" textAnchor="middle" fontSize="14.500" fontFamily="Open Sans" fill="#fff" stroke="none">1</text></Icon>
);

function WordWindow() {
  return (
    <Word>
      <WordTop>
        <OfficeOrb>
          <Icon w={28} h={28} sw={3.600}>
            <rect x="4" y="3" width="9" height="9" rx="1.500" stroke="#d8431f" />
            <rect x="16" y="8" width="7.500" height="6.500" rx="1.500" stroke="#3f7fd0" sw={3} />
            <rect x="6" y="15.500" width="7" height="8" rx="1.500" stroke="#f2b33a" />
            <rect x="16" y="17" width="8" height="8" rx="1.500" stroke="#5aa83e" />
          </Icon>
        </OfficeOrb>
        <QuickBar>
          <Icon w={16} h={16}><path d="M0 1h16v14H2l-2-2z" fill="#4147a8" /><rect x="3" y="1" width="10" height="7" fill="#eef" /><rect x="5" y="10" width="7" height="5" fill="#cfd4e8" /><rect x="9" y="11" width="2" height="4" fill="#333" /></Icon>
          <Slot $w={16} $ml={8}><Icon w={15} h={14}><path d="M1 1v8h8L6.500 6.500c3-2 5.500 1 3 6.500 6-5 4-13-6-9z" fill="#4472c4" /></Icon></Slot>
          <Slot $w={8} $ml={5}><Down w={7} /></Slot>
          <Slot $w={16} $ml={8}><Icon w={15} h={14}><path d="M3.500 3C0 7 2 12.500 7 12.500S14 8 12 4" stroke="#4472c4" strokeWidth="3" /><path d="M7 0h7l-6 7z" fill="#4472c4" /></Icon></Slot>
        </QuickBar>
        <Slot $w={8} $ml={8}><Icon w={7} h={7}><path d="M0 0h7v1.500H0zM0 3h7L3.500 7z" fill="#333" /></Icon></Slot>
        <Fit w={227} ml={448} size={13} mt={1} color="#222">Sentence Structures - Microsoft Word</Fit>
        <Slot $w={12} $ml={473}><Icon w={12} h={2}><rect width="12" height="1.500" fill="#222" /></Icon></Slot>
        <Slot $w={12} $ml={39} $mt={-2}><Icon w={12} h={12} stroke="#222" sw={1.400}><path d="M.7 3h8.300v8.300H.7zM3 3V.7h8.300v8.300H9" /></Icon></Slot>
        <AppSlot $w={51} $h={27} $ml={21} $bg="#e81123"><CloseX size={11} color="#fff" sw={1.500} /></AppSlot>
      </WordTop>
      <WordTabs>
        <HomeTab><Fit w={34} ml={13}>Home</Fit></HomeTab>
        {tabs.map(([t, w, ml]) => <Fit key={t} w={w} ml={ml}>{t}</Fit>)}
        <Grow />
        <Slot $w={16} $mt={-3}><Icon w={16}><circle cx="8" cy="8" r="7.300" fill="#2f6fd0" stroke="#dfe9f8" strokeWidth="1" /><circle cx="8" cy="8" r="7.800" stroke="#5f80b5" strokeWidth=".7" /><text x="8" y="12" textAnchor="middle" fontSize="11" fontWeight="700" fontFamily="Open Sans" fill="#fff" stroke="none">?</text></Icon></Slot>
        <Slot $w={5} />
      </WordTabs>
      <WordRibbon />
      <HRuler />
      <Document />
      <StatusBar>
        <Fit w={82} ml={9}>Page: 18 of 20</Fit><Sep $ml={8} />
        <Fit w={76} ml={10}>Words: 2,644</Fit><Sep $ml={9} />
        <Slot $w={18} $ml={9}><Icon w={18} h={17}><path d="M0 10l8-4 9 4-8 7z" fill="#fff" stroke="#51659a" strokeWidth="1.400" /><path d="M8 2l7 7M15 1L9 9" stroke="#d8452c" strokeWidth="2.400" /></Icon></Slot>
        <Fit w={132} ml={18}>English (United States)</Fit><Sep $ml={8} />
        <Grow />
        <Sep $ml={0} />
        <Views>
          <View $on><Lines w={12} c="#555" rows={[[0, 12], [0, 12], [0, 12], [0, 12]]} /></View>
          <View><Icon w={13} h={12} stroke="#555" sw={1} fill="#fff"><path d="M.5 1l6 1.500L12.500 1v9l-6 1.500L.5 10zM6.500 2.500v9" /></Icon></View>
          <View><Icon w={13} h={13}><rect x=".5" y=".5" width="9" height="11" fill="#fff" stroke="#666" strokeWidth="1" /><circle cx="9" cy="9" r="3.500" fill="#3c8f6a" /></Icon></View>
          <View><Lines w={12} c="#777" rows={[[0, 8], [3, 8], [5, 7], [3, 8]]} /></View>
          <View><Lines w={12} c="#666" rows={[[0, 12], [0, 12], [0, 12], [0, 12]]} /></View>
        </Views>
        <Fit w={30} ml={10}>130%</Fit>
        <Slot $w={18} $ml={10}><RoundBtn><Icon w={8} h={2}><rect width="8" height="2" fill="#333" /></Icon></RoundBtn></Slot>
        <ZoomLine $w={55} />
        <Icon w={11} h={15}><path d="M1 1h9v9l-4.500 4L1 10z" fill="#dfe6f2" stroke="#5f6f8c" strokeWidth="1.500" /></Icon>
        <ZoomLine $w={50} />
        <Slot $w={18}><RoundBtn><Icon w={8}><path d="M4 0v8M0 4h8" stroke="#333" strokeWidth="1.800" /></Icon></RoundBtn></Slot>
        <Slot $w={6} />
      </StatusBar>
      <InnerTaskbar>
        <Slot $w={19} $ml={17}><WinLogo w={19} c="#e6e6e6" /></Slot>
        <InnerSearch>
          <Slot $w={24} $ml={11}><Icon w={24} h={24}><circle cx="12" cy="12" r="10" stroke="#111" strokeWidth="3.200" /></Icon></Slot>
          <Fit w={146} ml={11} mt={1}>Type here to search</Fit>
          <Slot $w={14} $ml={168}><MicOutline c="#333" /></Slot>
        </InnerSearch>
        <AppSlot $w={60}><Flower size={27} stroke="#e8a33c" inner="#c65a35" /></AppSlot>
        <AppSlot $w={55} $bg="#33373f"><Icon w={24} h={26}><rect x="4" y="0" width="20" height="22" fill="#dfe5f0" /><path d="M0 5h19v21H3z" fill="#8ea3cf" /></Icon></AppSlot>
        <Fit w={137} ml={442} color="#9a9c9e">Windows Media Player</Fit>
        <Slot $w={10} $ml={8} $mt={-24}><Icon w={9} h={7} stroke="#ddd" sw={1.300}><path d="M0 0l3.500 3.500L0 7M5 0l3.500 3.500L5 7" /></Icon></Slot>
        <Slot $w={18} $ml={26}><People c="#c9c9c9" /></Slot>
        <Slot $w={15} $ml={23}><Icon w={14} h={8} stroke="#ddd" sw={1.500}><path d="M0 8l7-7 7 7" /></Icon></Slot>
        <Slot $w={20} $ml={10}><Speaker c="#d0d0d0" /></Slot>
        <Fit w={26} ml={11}>ENG</Fit>
        <TwoLine $ml={14} $lh={20} $mt={1}><Fit w={30}>19:58</Fit><Fit w={66}>09-08-2019</Fit></TwoLine>
        <Slot $w={23} $ml={22} $mt={6}><Icon w={27} h={28}><path d="M0 0h18v14h-9l-4 4v-4H0z" fill="#ddd" /><path d="M3 4h12M3 7.500h12M3 11h8" stroke="#222" strokeWidth="1.500" /><circle cx="17" cy="17" r="9" fill="#222" stroke="#666" strokeWidth="1" /><text x="17" y="22" textAnchor="middle" fontSize="13" fontFamily="Open Sans" fill="#ddd" stroke="none">1</text></Icon></Slot>
        <Grow />
        <EdgeStrip />
        <EdgePad />
      </InnerTaskbar>
    </Word>
  );
}

/* overlays on the stage */
const Notch = styled.div`
  position: absolute;
  left: 870px;
  top: -1px;
  width: 80px;
  height: 20px;
  padding: 6px 20px;
  border-radius: 0 0 9px 9px;
  background: #22262c;
  display: flex;
  flex-direction: column;
  gap: 2px;
  i { flex: none; height: 1px; background: #8d9cab; }
  i:nth-child(2) { height: 2px; background: #66717e; }
`;
const Activate = styled.div`
  position: absolute;
  left: 1309px;
  top: 736px;
  color: rgba(150, 150, 150, 0.72);
  line-height: 30px;
`;
const Shade = styled.div`
  position: absolute;
  left: 0;
  top: 740px;
  width: 1820px;
  height: 130px;
  background: linear-gradient(rgba(0, 0, 0, 0), rgba(0, 0, 0, 0.5));
`;
const Controls = styled.div`
  position: absolute;
  left: 671px;
  top: 755px;
  height: 115px;
  display: flex;
  align-items: flex-start;
  color: #fff;
  font-family: ${LATO};
  font-size: 18.500px;
`;
const Control = styled.div`
  width: 90px;
  margin-left: ${(p) => p.$ml || 0}px;
  display: flex;
  flex-direction: column;
  align-items: center;
`;
const Disc = styled.div`
  height: 70px;
  display: flex;
  align-items: center;
  & > div {
    width: ${(p) => p.$d}px;
    height: ${(p) => p.$d}px;
    border-radius: 50%;
    background: ${(p) => p.$bg};
    display: flex;
    align-items: center;
    justify-content: center;
  }
`;
const Label = styled.div`
  margin-top: 10px;
  line-height: 24px;
  -webkit-text-stroke: 0.300px #fff;
`;
const VLine = styled.div`
  width: 1px;
  height: 60px;
  margin: 5px 0 0 35px;
  background: rgba(255, 255, 255, 0.35);
`;
const TalkNote = styled.div`
  position: absolute;
  left: 1637px;
  top: 827px;
  width: 183px;
  height: 43px;
  padding: 0 0 2px 1px;
  display: flex;
  align-items: center;
  background: linear-gradient(#343d4b, #303844);
  color: #fff;
  font-family: ${LATO};
  font-size: 19.500px;
`;

function MeetingControls() {
  return (
    <Controls>
      <Control>
        <Disc $d={58} $bg="rgba(112,128,152,0.78)"><div><Icon w={24} h={30} stroke="#e8ebf0" sw={2.400}><rect x="8" y="2" width="8" height="15" rx="4" /><path d="M3 12c0 11 18 11 18 0M12 20v7M8 27.500h8M22 3L2 24" /></Icon></div></Disc>
        <Label><Fit w={28}>Mic</Fit></Label>
      </Control>
      <Control $ml={22}>
        <Disc $d={58} $bg="#fff"><div><Icon w={27} h={22} stroke="#22272e" sw={2}><rect x="1" y="5" width="17" height="13" rx="1" /><path d="M20 10l6-4v12l-6-4M23 1L3 21" /></Icon></div></Disc>
        <Label><Fit w={59}>Camera</Fit></Label>
      </Control>
      <Control $ml={23}>
        <Disc $d={58} $bg="#fff"><div><Icon w={27} h={24} stroke="#9aa8bd" sw={2}><rect x="1" y="2" width="25" height="17" rx="1" /><path d="M9.500 23h8M13.500 19v4M24 1L4 21M13.500 8v5" /></Icon></div></Disc>
        <Label><Fit w={53}>Screen</Fit></Label>
      </Control>
      <VLine />
      <Control $ml={37}>
        <Disc $d={63} $bg="#f73d5a"><div><Icon w={30} h={14} stroke="#fff" sw={2.400}><path d="M1.500 5c4-5 23-5 27 0v6l-7 1v-4c-3-1.500-10-1.500-13 0v4l-7-1z" /></Icon></div></Disc>
        <Label><Fit w={45}>Leave</Fit></Label>
      </Control>
    </Controls>
  );
}

/* ---------- desktop taskbar ---------- */

const Taskbar = styled.div`
  height: 50px;
  flex: none;
  display: flex;
  align-items: center;
  background: linear-gradient(90deg, #2e3034, #2c2e31 60%, #262b31);
  color: #fff;
  font-size: 15px;
`;
const SearchBox = styled.div`
  width: 430px;
  height: 50px;
  flex: none;
  margin-left: 20px;
  display: flex;
  align-items: center;
  background: #f1f1f1;
  border-top: 1px solid #d0d0d0;
  color: #222;
  font-size: 17px;
`;
const PeekLine = styled.div`
  width: 1px;
  height: 50px;
  margin-left: 10px;
  background: #8a8c8f;
`;

function MainTaskbar() {
  return (
    <Taskbar>
      <Slot $w={20} $ml={20}><WinLogo w={20} c="#fff" /></Slot>
      <SearchBox>
        <Slot $w={28} $ml={11}><Icon w={28}><circle cx="14" cy="14" r="11.800" stroke="#050505" strokeWidth="3.600" /></Icon></Slot>
        <Fit w={152} ml={11} mt={-1}>Type here to search</Fit>
        <Slot $w={14} $ml={195}><MicOutline c="#222" /></Slot>
      </SearchBox>
      <AppSlot $w={60}><Icon w={21} h={20} stroke="#fff" sw={1.200}><path d="M1 .5v4h12v-4M1 7h12v7H1zM1 19.500v-3h12v3M19 1v4M19 11v8" /><rect x="18" y="6.500" width="2.500" height="2.500" fill="#fff" stroke="none" /></Icon></AppSlot>
      <AppSlot $w={68}><Icon w={24} h={27} vb="0 0 24 27"><path d="M0 12C1 4.500 6 0 12.500 0 19.500 0 24 5 24 12v3.500H8.500C9 20 12 21.500 16 21.500c2.800 0 5-.8 7-2V25c-2.500 1.400-5 2-8 2C8 27 3.500 22.500 3.500 16.500c0-4 2-7 5.500-9-1 1.300-1.500 2.500-1.500 3.700h9c0-3.500-1.700-5.700-5-5.700C7 5.500 3 8 0 12z" fill="#0f7dd8" /></Icon></AppSlot>
      <AppSlot $w={56}><Icon w={28} h={24}><path d="M0 2h10l2 2h16v20H0z" fill="#fde08a" /><path d="M1 0h9v3H1z" fill="#f4c23e" /><path d="M5 24V14h18v10h-5v-5h-8v5z" fill="#41b4e6" /></Icon></AppSlot>
      <AppSlot $w={66}><Icon w={29} h={29}><path d="M9 9V6a5.500 5.500 0 0 1 11 0v3" stroke="#fff" strokeWidth="2" /><path d="M0 8h29v21H0z" fill="#fff" /><rect x="8" y="12" width="6" height="6" fill="#f25022" /><rect x="15" y="12" width="6" height="6" fill="#7fba00" /><rect x="8" y="19" width="6" height="6" fill="#00a4ef" /><rect x="15" y="19" width="6" height="6" fill="#ffb900" /></Icon></AppSlot>
      <AppSlot $w={61} $bg="#5a5c5f" $line="#76b9ed">
        <Icon w={27} h={27} vb="0 0 48 48">
          <path d="M3.200 12A24 24 0 0 0 22 48L33 29z" fill="#0f9d58" /><path d="M44.800 12A24 24 0 0 1 22 48L33 29 24 12z" fill="#ffcd40" /><path d="M24 13h21A24 24 0 0 0 3.200 12L14 30z" fill="#db4437" /><circle cx="24" cy="24" r="11" fill="#fff" /><circle cx="24" cy="24" r="9" fill="#4285f4" />
        </Icon>
      </AppSlot>
      <AppSlot $w={62}><Icon w={28} h={31} vb="0 0 30 32" sw={2}><path d="M15 2l13 6v15l-13 8L2 23V8z" fill="#bcd2ee" stroke="#1a2355" /><path d="M15 2l13 6-13 6L2 8z" fill="#cfe6e6" /><path d="M2 8l13 6v16L2 23z" fill="#7fa6dc" /><path d="M28 8l-13 6v16l13-7z" fill="#dce8f4" /></Icon></AppSlot>
      <AppSlot $w={62}><Icon w={28} h={30} stroke="#fa0f96" sw={3.400}><path d="M2 12V9a7 7 0 0 1 7-7h10a7 7 0 0 1 7 7v3M2 18v3a7 7 0 0 0 7 7h10a7 7 0 0 0 7-7v-3" /><path d="M8 9v9c0 5 6 4 6 0v-5 5c0 4 6 5 6 0V9" /></Icon></AppSlot>
      <AppSlot $w={63}><Icon w={30} h={26}><path d="M0 9L15 0l15 9v17H0z" fill="#fff" /><path d="M1.500 9h27L15.500 15 24 21 13 15.500z" fill="#2e3034" /></Icon></AppSlot>
      <AppSlot $w={61} $bg="#bd6824" $line="#ff7a0c"><Icon w={26} h={28}><path d="M2 0h15v20H4z" fill="#f3cd69" /><path d="M2 0l5 4v24l-5-5z" fill="#fde8a2" /><path d="M12.500 25.500c-4.500 0-4.500-5.500-.5-6 1-5 8-5.500 9.500-.5 5.500 0 5 6.500 1 6.500z" fill="#0f86dc" /></Icon></AppSlot>
      <Grow />
      <Slot $w={28}><Icon w={28}><circle cx="14" cy="14" r="13.500" fill="#fff" /><circle cx="14" cy="14" r="11" fill="#0d8fd6" /><path d="M10.500 11c0-5 7.500-5 7.500-.5 0 3-3.700 3-3.700 6" stroke="#fff" strokeWidth="2.600" /><circle cx="14.300" cy="20.500" r="1.600" fill="#fff" /></Icon></Slot>
      <Slot $w={18} $ml={31}><People c="#fff" /></Slot>
      <Slot $w={16} $ml={33}><Icon w={15} h={8} stroke="#fff" sw={1.600}><path d="M0 8l7.500-7.500L15 8" /></Icon></Slot>
      <Slot $w={20} $ml={22}><Icon w={20} h={14} stroke="#fff" sw={1.300}><path d="M7 3h10.500v10H4V9.500" /><path d="M17.500 6h2v4h-2" /><rect x="6.500" y="5" width="5" height="6" fill="#fff" stroke="none" /><path d="M0 2.500h5v2.500c0 1.300-1 2-2.500 2S0 6.300 0 5zM1.300 0v2M3.700 0v2M2.500 7v2.500" /></Icon></Slot>
      <Slot $w={22} $ml={19}><Icon w={21} h={13}><path d="M4 13c-5-.5-5-6 0-6.500C5 1 12-1 14.500 3.500 19 4 21 7 20.500 10c-.5 2-1.500 3-3 3z" fill="#cfd0d2" /><path d="M4 13c-5-.5-5-6 0-6.500 4-1 6 1.500 8 3.500l6 3z" fill="#fff" /></Icon></Slot>
      <Slot $w={18} $ml={21}><Icon w={17} h={17} stroke="#ddd" sw={1.300}><path d="M.7 16C.7 7 7 .7 16 .7M4.500 16C4.500 9.500 9 4.500 16 4.500M8.500 16c0-4 3-7.500 7.500-7.500" /><path d="M12 16c0-2.500 1.500-4 4-4" /><circle cx="14.500" cy="14.500" r="1.500" fill="#fff" /></Icon></Slot>
      <Slot $w={20} $ml={19}><Speaker c="#fff" dim="#8c8e91" /></Slot>
      <TwoLine $ml={18} $lh={23}><Fit w={29}>ENG</Fit><Fit w={14}>IN</Fit></TwoLine>
      <TwoLine $ml={15} $lh={23}><Fit w={60}>07:58 PM</Fit><Fit w={76}>09-08-2019</Fit></TwoLine>
      <Slot $w={34} $ml={23} $mt={7}><Note c="#fff" dark="#2b2d31" badge="#8d8f92" /></Slot>
      <PeekLine />
      <Slot $w={7} />
    </Taskbar>
  );
}

export default function App() {
  return (
    <Screen>
      <Global />
      <Chrome />
      <Header />
      <Stage>
        <Side $w={184}><Hills $a={350} /></Side>
        <WordWindow />
        <Side $w={183}><Hills $a={8} /></Side>
        <Shade />
        <Notch><i /><i /><i /></Notch>
        <Activate><Fit w={178} size={22}>Activate Windows</Fit><Fit w={266} size={16} mt={-4}>Go to Settings to activate Windows.</Fit></Activate>
        <MeetingControls />
        <TalkNote>
          <Fit w={68} weight={700}>Talking:</Fit><Fit w={94} ml={5}>Jagat Patel</Fit>
        </TalkNote>
        <Rail>
          <RailItem $h={14} $mt={603}><Icon w={13}><circle cx="6.500" cy="6.500" r="5.500" fill="#f1660f" stroke="#ffb37c" strokeWidth="1" /></Icon></RailItem>
          <RailItem $h={22} $mt={30}><Icon w={26} h={22} fill="#1fa878"><rect x="0" y="13" width="7" height="9" rx="1" /><rect x="9" y="7" width="7" height="15" rx="1" /><rect x="18" y="0" width="7.500" height="22" rx="1" /></Icon></RailItem>
          <RailItem $h={24} $mt={31}><Icon w={26} h={22} stroke="#c2cedd" sw={2.400}><path d="M1 2.500h3c6 0 10 16 17 16h3M1 19h3c3 0 5-3 6.500-6M14 7.500C16 4.500 18 3 21 3h3M21 0l3.500 3L21 6M21 15.500l3.500 3-3.500 3" /></Icon></RailItem>
          <RailItem $h={24} $mt={33}><Icon w={22} h={22} stroke="#c2cedd" sw={2.400}><path d="M1.500 7V1.500H7M1.500 1.500L7.500 7.500M15 1.500h5.500V7M20.500 1.500l-6 6M1.500 15v5.500H7M1.500 20.500l6-6M20.500 15v5.500H15M20.500 20.500l-6-6" /></Icon></RailItem>
          <RailItem $h={28} $mt={33}><Icon w={28} stroke="#c2cedd" sw={2.400}><circle cx="14" cy="14" r="12.700" /><path d="M10.500 11c0-5 7.300-4.500 7.300-.5 0 3-3.800 3-3.800 5.500" /><circle cx="14" cy="20" r=".8" fill="#c2cedd" /></Icon></RailItem>
        </Rail>
      </Stage>
      <MainTaskbar />
    </Screen>
  );
}
